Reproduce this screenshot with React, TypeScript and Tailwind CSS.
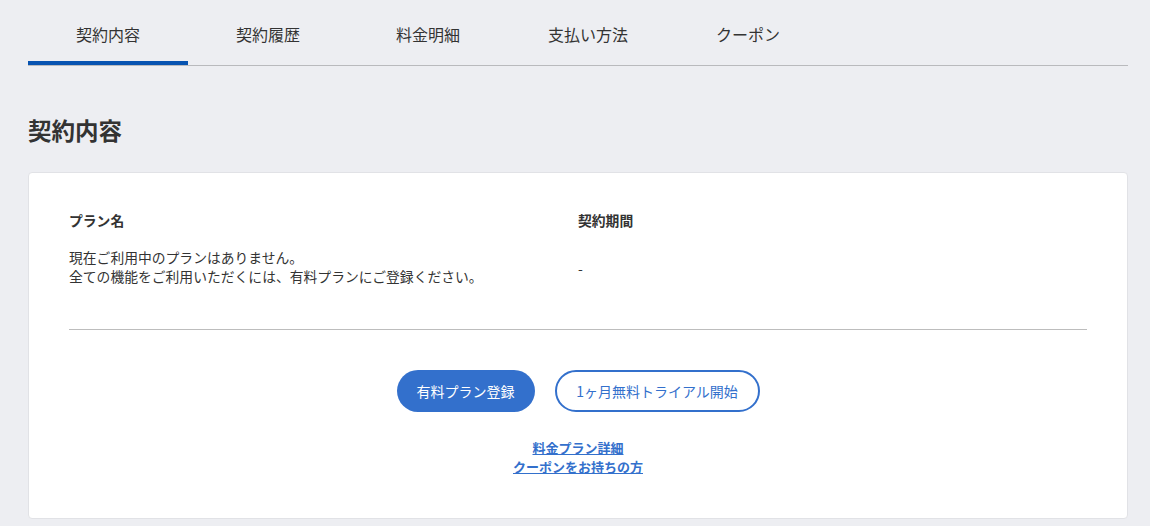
import React from "react";

const font = { fontFamily: '"Noto Sans CJK JP", "Noto Sans", sans-serif' };

export default function App() {
  const tabs = ["契約内容", "契約履歴", "料金明細", "支払い方法", "クーポン"];
  return (
    <div className="min-h-[526px] bg-[#edeef2] pl-[28px] pr-[22px] text-[#333]" style={font}>
      <div className="flex border-b border-[#b9babd] pt-[20px]">
        {tabs.map((t, i) => (
          <div
            key={t}
            className={`w-[160px] h-[45px] flex items-start justify-center pt-[2px] text-[16px] text-[#333] ${
              i === 0 ? "border-b-[4px] border-[#0753b1] -mb-[1px]" : ""
            }`}
          >
            {t}
          </div>
        ))}
      </div>
      <h1 className="mt-[48px] text-[23.5px] font-bold text-[#333] leading-[32px]">契約内容</h1>
      <div className="mt-[26px] bg-white rounded-[4px] border border-[#e1e2e6] px-[40px] pt-[38px] pb-[42px]">
        <div className="grid grid-cols-2 text-[13.8px] leading-[19px]">
          <div>
            <div className="font-bold">プラン名</div>
            <div className="mt-[18px]">現在ご利用中のプランはありません。</div>
            <div>全ての機能をご利用いただくには、有料プランにご登録ください。</div>
          </div>
          <div>
            <div className="font-bold">契約期間</div>
            <div className="mt-[29px]">-</div>
          </div>
        </div>
        <div className="mt-[43px] border-t border-[#bdbdbd]" />
        <div className="mt-[40px] flex justify-center gap-[20px]">
          <button className="h-[42px] w-[138px] rounded-full bg-[#3370cc] text-white text-[14px]">
            有料プラン登録
          </button>
          <button className="h-[42px] w-[205px] rounded-full border-2 border-[#3370cc] bg-white text-[#3370cc] text-[14px]">
            1ヶ月無料トライアル開始
          </button>
        </div>
        <div className="mt-[26px] flex flex-col items-center text-[13px] leading-[19px] font-bold text-[#3370cc]">
          <a className="underline">料金プラン詳細</a>
          <a className="underline">クーポンをお持ちの方</a>
        </div>
      </div>
    </div>
  );
}
